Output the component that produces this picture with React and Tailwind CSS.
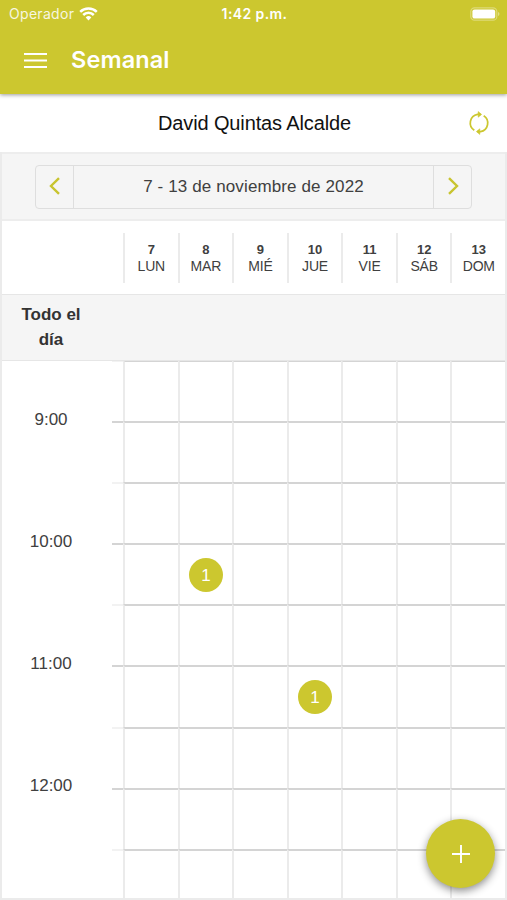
const days = [
  { num: 7, name: 'LUN' },
  { num: 8, name: 'MAR' },
  { num: 9, name: 'MIÉ' },
  { num: 10, name: 'JUE' },
  { num: 11, name: 'VIE' },
  { num: 12, name: 'SÁB' },
  { num: 13, name: 'DOM' },
]

const hours = ['9:00', '10:00', '11:00', '12:00']

// half-hour slots, the first one is 8:30
const slots = ['8:30', '9:00', '9:30', '10:00', '10:30', '11:00', '11:30', '12:00', '12:30']

const events = {
  '10:00': { 8: 1 },
  '11:00': { 10: 1 },
}

function StatusBar() {
  return (
    <div className="grid grid-cols-3 items-center h-[27px] pl-[9px] pr-[7px] text-white font-[Inter,sans-serif]">
      <div className="flex items-center gap-[5px]">
        <span className="text-[14px] tracking-[0.3px] opacity-85">Operador</span>
        <svg width="19" height="14" viewBox="0 0 19 14" fill="none" stroke="currentColor" strokeWidth="2.5">
          <path d="M1.2 4.9a11.8 11.8 0 0 1 16.6 0" />
          <path d="M4.2 8a7.5 7.5 0 0 1 10.6 0" />
          <path d="M9.5 13.4 6.7 10.4a4 4 0 0 1 5.6 0z" fill="currentColor" stroke="none" />
        </svg>
      </div>
      <span className="text-center text-[14px] font-semibold tracking-[0.4px] whitespace-nowrap">1:42 p.m.</span>
      <div className="flex justify-end">
        <svg width="30" height="14" viewBox="0 0 30 14">
          <rect x="0.8" y="0.8" width="26" height="12.4" rx="3.8" fill="none" stroke="#fff" strokeOpacity="0.35" strokeWidth="1.2" />
          <rect x="2.4" y="2.4" width="22.8" height="9.2" rx="2.2" fill="#fff" />
          <path d="M28.2 5v4c1.6-.6 1.6-3.4 0-4z" fill="#fff" fillOpacity="0.5" />
        </svg>
      </div>
    </div>
  )
}

function Header() {
  return (
    <header className="relative z-10 h-[94px] bg-[#ccc72f] shadow-[0_1px_4px_rgba(0,0,0,0.4)]">
      <StatusBar />
      <div className="flex items-center h-[66px] pl-6 gap-6">
        <svg width="23" height="17" viewBox="0 0 23 17" stroke="#fff" strokeWidth="2.2">
          <path d="M0 2h23M0 8.5h23M0 15h23" />
        </svg>
        <h1 className="text-white text-[23.5px] font-semibold tracking-[0.1px] font-[Inter,sans-serif]">Semanal</h1>
      </div>
    </header>
  )
}

function Chevron({ d }) {
  return (
    <svg className="-mt-[2px]" width="12" height="18" viewBox="0 0 12 18" fill="none" stroke="#c8c42f" strokeWidth="2.4">
      <path d={d} />
    </svg>
  )
}

function Toolbar() {
  return (
    <div className="h-[69px] bg-[#f5f5f5] border-y-2 border-[#ededed] pt-[11px] pl-[33px] pr-[33px]">
      <div className="flex h-[44px] border border-[#dedede] rounded-[4px] text-[#404040]">
        <button className="w-[38px] flex items-center justify-center border-r border-[#dedede]">
          <Chevron d="M10 1.2 2 9l8 7.8" />
        </button>
        <div className="flex-1 flex items-center justify-center text-[17px] tracking-[0.12px]">
          7 - 13 de noviembre de 2022
        </div>
        <button className="w-[38px] flex items-center justify-center border-l border-[#dedede]">
          <Chevron d="M2 1.2 10 9l-8 7.8" />
        </button>
      </div>
    </div>
  )
}

export default function App() {
  return (
    <div className="relative w-[507px] h-[900px] overflow-hidden bg-white font-['Liberation_Sans',Arial,sans-serif]">
      <Header />

      <div className="relative h-[58px] flex items-center justify-center">
        <h2 className="text-[20px] text-[#111] pl-[2px] tracking-[-0.12px]">David Quintas Alcalde</h2>
        <svg className="absolute right-[17px] top-[17px]" width="22" height="24" viewBox="0 0 22 24" fill="none" stroke="#ccc72f" strokeWidth="1.7">
          <path d="M6.3 19.3A8.7 8.7 0 0 1 9.5 3.4h3" />
          <path d="M15.7 4.7A8.7 8.7 0 0 1 12.5 20.6h-3" />
          <path d="M10.2.6 13.6 3.4 10.2 6.2zM11.8 17.8 8.4 20.6l3.4 2.8z" fill="#ccc72f" strokeWidth="0.6" />
        </svg>
      </div>

      <div className="h-[748px] border-x-2 border-b-2 border-[#ebebeb]">
        <Toolbar />

        <div className="h-[73px] flex pl-[121px] pt-[12px]">
          {days.map((day) => (
            <div key={day.num} className="flex-1 h-[50px] border-l-2 border-[#ebebeb] flex flex-col items-center pt-[8px] text-[#404040]">
              <span className="text-[13px] leading-[17px] font-bold">{day.num}</span>
              <span className="text-[14px] leading-[17px] tracking-[-0.2px]">{day.name}</span>
            </div>
          ))}
        </div>

        <div className="h-[66px] bg-[#f5f5f5] border-t border-[#e6e6e6] pt-[8px]">
          <div className="w-[98px] px-4 text-center text-[17px] leading-[24.5px] font-bold text-[#333]">Todo el día</div>
        </div>

        <div className="flex h-[538px] overflow-hidden border-t border-[#e6e6e6]">
          <div className="w-[98px] pt-[47px] text-center text-[17px] leading-[24px] text-[#404040]">
            {hours.map((hour) => (
              <div key={hour} className="h-[122.1px]">{hour}</div>
            ))}
          </div>
          <div className="flex-1 pl-[12px] -mt-px">
            {slots.map((slot) => (
              <div key={slot} className="flex h-[61.1px]">
                <div className={`w-[11px] border-t-2 ${slot.endsWith(':00') ? 'border-[#d4d4d4]' : 'border-[#f2f2f2]'}`} />
                {days.map((day) => (
                  <div key={day.num} className="flex-1 border-l-2 border-l-[#ebebeb] border-t-2 border-t-[#d4d4d4] flex items-center justify-center">
                    {events[slot]?.[day.num] && (
                      <span className="size-[34px] rounded-full bg-[#ccc72f] text-white text-[17px] pt-[2px] flex items-center justify-center">
                        {events[slot][day.num]}
                      </span>
                    )}
                  </div>
                ))}
              </div>
            ))}
          </div>
        </div>
      </div>

      <button className="absolute right-3 bottom-[12px] size-[69px] rounded-full bg-[#ccc72f] shadow-[0_3px_9px_rgba(0,0,0,0.45)] flex items-center justify-center">
        <svg width="18" height="18" viewBox="0 0 18 18" stroke="#fff" strokeWidth="1.9">
          <path d="M9 0v18M0 9h18" />
        </svg>
      </button>
    </div>
  )
}
